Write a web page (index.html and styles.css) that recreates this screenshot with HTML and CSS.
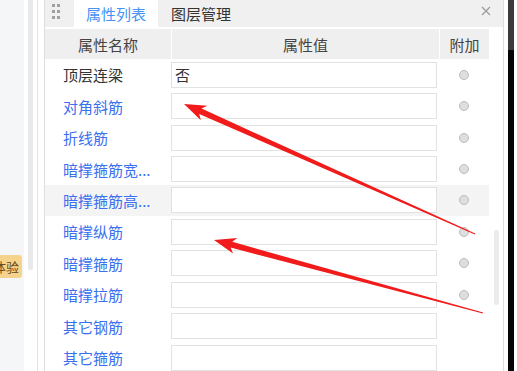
FILE: index.html
```html
<!DOCTYPE html>
<html lang="zh-CN">
<head>
    <meta charset="UTF-8">
    <title>属性列表</title>
    <link rel="stylesheet" href="styles.css">
</head>
<body>
    <div class="side">
        <div class="badge">体验</div>
    </div>
    <div class="gutter"><div class="thumb"></div></div>
    <div class="frame">
        <div class="panel">
            <div class="tabbar">
                <svg class="grip" width="10" height="16" viewBox="0 0 10 16">
                    <rect x="1" y="1" width="3" height="3" fill="#a0a0a0"/>
                    <rect x="6" y="1" width="3" height="3" fill="#a0a0a0"/>
                    <rect x="1" y="7" width="3" height="3" fill="#a0a0a0"/>
                    <rect x="6" y="7" width="3" height="3" fill="#a0a0a0"/>
                    <rect x="1" y="13" width="3" height="3" fill="#a0a0a0"/>
                    <rect x="6" y="13" width="3" height="3" fill="#a0a0a0"/>
                </svg>
                <div class="tab active">属性列表</div>
                <div class="tab">图层管理</div>
                <svg class="close" width="10" height="10" viewBox="0 0 10 10">
                    <path d="M1 1 L9 9 M9 1 L1 9" stroke="#9a9a9a" stroke-width="1.2"/>
                </svg>
            </div>
            <div class="body">
                <div class="grid">
                    <div class="row head">
                        <div class="cell">属性名称</div>
                        <div class="cell">属性值</div>
                        <div class="cell">附加</div>
                    </div>
                    <div class="row">
                        <div class="label plain">顶层连梁</div>
                        <div class="value"><div class="box">否</div></div>
                        <div class="extra"><span class="radio"></span></div>
                    </div>
                    <div class="row">
                        <div class="label">对角斜筋</div>
                        <div class="value"><div class="box"></div></div>
                        <div class="extra"><span class="radio"></span></div>
                    </div>
                    <div class="row">
                        <div class="label">折线筋</div>
                        <div class="value"><div class="box"></div></div>
                        <div class="extra"><span class="radio"></span></div>
                    </div>
                    <div class="row">
                        <div class="label">暗撑箍筋宽...</div>
                        <div class="value"><div class="box"></div></div>
                        <div class="extra"><span class="radio"></span></div>
                    </div>
                    <div class="row hover">
                        <div class="label">暗撑箍筋高...</div>
                        <div class="value"><div class="box"></div></div>
                        <div class="extra"><span class="radio"></span></div>
                    </div>
                    <div class="row">
                        <div class="label">暗撑纵筋</div>
                        <div class="value"><div class="box"></div></div>
                        <div class="extra"><span class="radio"></span></div>
                    </div>
                    <div class="row">
                        <div class="label">暗撑箍筋</div>
                        <div class="value"><div class="box"></div></div>
                        <div class="extra"><span class="radio"></span></div>
                    </div>
                    <div class="row">
                        <div class="label">暗撑拉筋</div>
                        <div class="value"><div class="box"></div></div>
                        <div class="extra"><span class="radio"></span></div>
                    </div>
                    <div class="row">
                        <div class="label">其它钢筋</div>
                        <div class="value"><div class="box"></div></div>
                        <div class="extra"></div>
                    </div>
                    <div class="row">
                        <div class="label">其它箍筋</div>
                        <div class="value"><div class="box"></div></div>
                        <div class="extra"></div>
                    </div>
                </div>
                <div class="scroll"><div class="scroll-thumb"></div></div>
            </div>
        </div>
        <div class="edge"></div>
    </div>

    <svg class="arrows" width="517" height="371" viewBox="0 0 517 371">
        <polygon fill="#f21b1b" points="184,104 200.8,120.3 199.2,114 474.8,234.4 475.2,233.6 201.6,108.6 207.4,105.7"/>
        <polygon fill="#f21b1b" points="214,240 233.1,253.5 230.6,247.6 482.9,313.4 483.1,312.6 232.2,241.8 237.3,238.1"/>
    </svg>
</body>
</html>
```

FILE: styles.css
```css
body {
    margin: 0;
    width: 517px;
    height: 371px;
    overflow: hidden;
    display: flex;
    background: #fff;
    font-family: "Noto Sans CJK SC", "Noto Sans", sans-serif;
    font-size: 15px;
    color: #333;
}

.side {
    width: 24px;
    flex: none;
    background: #f5f6f8;
    overflow: hidden;
}

.badge {
    margin-top: 255px;
    margin-left: -10px;
    width: 26px;
    padding: 0 3px;
    height: 23px;
    line-height: 23px;
    font-size: 13px;
    white-space: nowrap;
    color: #6a4a18;
    background: #f6d38c;
    border-radius: 3px;
}

.gutter {
    width: 14px;
    flex: none;
    padding-left: 4px;
    box-sizing: border-box;
    border-right: 1px solid #e3e3e3;
}

.thumb {
    width: 5px;
    height: 270px;
    background: #e9e9e9;
    border-radius: 0 0 3px 3px;
}

.frame {
    flex: 1;
    display: flex;
    padding-left: 6px;
}

.panel {
    width: 460px;
    flex: none;
    border-left: 1px solid #dedede;
    border-right: 1px solid #dedede;
    box-sizing: border-box;
}

.tabbar {
    height: 27px;
    background: #f0f0f0;
    display: flex;
    align-items: center;
    margin-bottom: 2px;
}

.grip {
    flex: none;
    margin-left: 6px;
    margin-top: -6px;
}

.tab {
    height: 27px;
    line-height: 27px;
    padding: 0 13px;
    white-space: nowrap;
    color: #333;
}

.tab.active {
    margin-left: 13px;
    padding: 0 12px;
    background: #fff;
    color: #4592f4;
}

.close {
    flex: none;
    margin-left: auto;
    margin-right: 12px;
    margin-top: -6px;
}

.body {
    display: flex;
}

.grid {
    width: 444px;
}

.row {
    display: grid;
    grid-template-columns: 126px 268px 50px;
    height: 31.44px;
    align-items: center;
}

.row.head {
    height: 30px;
    background: #efefef;
    color: #444;
    align-items: stretch;
}

.row.head .cell {
    display: flex;
    align-items: center;
    justify-content: center;
}

.row.head .cell + .cell {
    border-left: 1px solid #fff;
}

.row.hover {
    background: #f4f4f4;
}

.label {
    padding-left: 18px;
    color: #3a6fee;
    white-space: nowrap;
}

.label.plain {
    color: #333;
}

.box {
    width: 266px;
    height: 26px;
    box-sizing: border-box;
    border: 1px solid #e2e2e2;
    background: #fff;
    line-height: 24px;
    padding-left: 3px;
    color: #333;
}

.extra {
    display: flex;
    justify-content: center;
}

.radio {
    width: 10px;
    height: 10px;
    box-sizing: border-box;
    border-radius: 50%;
    border: 1px solid #bdbdbd;
    background: #dedede;
}

.scroll {
    width: 16px;
    padding-left: 5px;
    box-sizing: border-box;
}

.scroll-thumb {
    width: 5px;
    height: 75px;
    margin-top: 201px;
    background: #ebebeb;
    border-radius: 3px;
}

.edge {
    width: 6px;
    margin-left: 4px;
    background: linear-gradient(#3b3b3b 0 50px, #050505 50px);
}

.arrows {
    position: absolute;
    top: 0;
    left: 0;
    pointer-events: none;
}
```
